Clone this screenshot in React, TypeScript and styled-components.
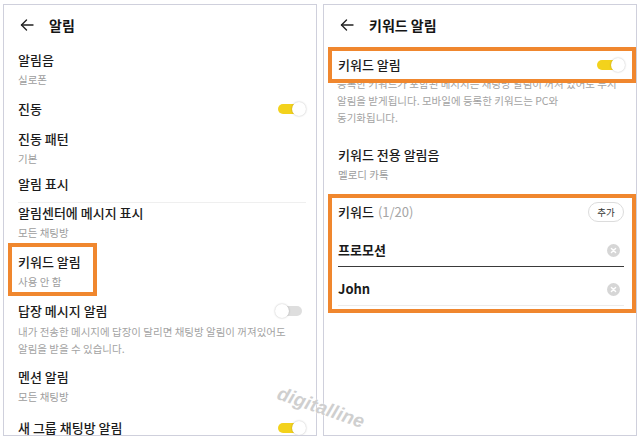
import React from "react";
import styled, { createGlobalStyle } from "styled-components";

const GlobalStyle = createGlobalStyle`
  html, body { margin: 0; padding: 0; background: #ffffff; }
  body { font-family: "Noto Sans CJK KR", "Noto Sans", sans-serif; }
  * { box-sizing: border-box; }
`;

const Page = styled.div`
  position: relative;
  width: 640px;
  height: 440px;
  padding: 4px 3px;
  display: flex;
  gap: 6px;
  background: #fff;
`;

const Panel = styled.section`
  position: relative;
  width: 314px;
  height: 432px;
  border: 1px solid #cfd0dc;
  background: #fff;
  overflow: hidden;
`;

const Header = styled.div`
  height: 40px;
  display: flex;
  align-items: center;
  padding-left: 16px;
  gap: 15px;
`;

const HeaderTitle = styled.h1`
  margin: 0;
  font-size: 14px;
  font-weight: 700;
  color: #151515;
  line-height: 20px;
`;

const Item = styled.div<{ $pt?: number; $pb?: number; $right?: number }>`
  display: flex;
  align-items: center;
  justify-content: space-between;
  padding: ${(p) => p.$pt ?? 5}px ${(p) => p.$right ?? 10}px ${(p) => p.$pb ?? 5}px 14px;
`;

const ItemText = styled.div`
  display: flex;
  flex-direction: column;
`;

const Title = styled.div`
  font-size: 13px;
  font-weight: 500;
  color: #1c1c1c;
  line-height: 20px;
`;

const Sub = styled.div`
  font-size: 10.5px;
  color: #9d9d9d;
  line-height: 19px;
`;

const Desc = styled.div<{ $pad?: string }>`
  font-size: 10.5px;
  color: #a3a3a3;
  line-height: 17px;
  padding: ${(p) => p.$pad ?? "0"};
`;

const SectionLabel = styled.div`
  padding: 1px 10px 0 14px;
  font-size: 13px;
  font-weight: 500;
  color: #1c1c1c;
  line-height: 20px;
`;

const Divider = styled.hr`
  margin: 8px 10px 0 14px;
  border: none;
  border-top: 1px solid #efefef;
  height: 0;
`;

const SwitchBox = styled.span<{ $on: boolean }>`
  position: relative;
  width: 28px;
  height: 14px;
  flex: none;
  &::before {
    content: "";
    position: absolute;
    top: 2px;
    height: 10px;
    border-radius: 5px;
    left: ${(p) => (p.$on ? "0" : "2px")};
    right: ${(p) => (p.$on ? "3px" : "1px")};
    background: ${(p) => (p.$on ? "#f3d21c" : "#dedede")};
  }
`;

const Knob = styled.span<{ $on: boolean }>`
  position: absolute;
  top: 0;
  ${(p) => (p.$on ? "right: 0;" : "left: 0;")}
  width: 14px;
  height: 14px;
  border-radius: 50%;
  background: #fff;
  box-shadow: 0 0 2px rgba(0, 0, 0, 0.28);
`;

const Switch = ({ on }: { on: boolean }) => (
  <SwitchBox $on={on}>
    <Knob $on={on} />
  </SwitchBox>
);

const Highlight = styled.div<{ $left: number; $top: number; $w: number; $h: number }>`
  position: absolute;
  left: ${(p) => p.$left}px;
  top: ${(p) => p.$top}px;
  width: ${(p) => p.$w}px;
  height: ${(p) => p.$h}px;
  border: 4px solid #f0872e;
  pointer-events: none;
`;

const KeywordHead = styled.div`
  display: flex;
  align-items: center;
  justify-content: space-between;
  padding: 13px 12px 0 14px;
`;

const KeywordTitle = styled.div`
  font-size: 13px;
  font-weight: 500;
  color: #1c1c1c;
  line-height: 20px;
  span {
    font-weight: 400;
    color: #a5a5a5;
    margin-left: 4px;
  }
`;

const AddButton = styled.button`
  height: 20px;
  width: 36px;
  padding: 0;
  border: 1px solid #dcdcdc;
  border-radius: 10px;
  background: #fff;
  font-family: inherit;
  font-size: 9.5px;
  color: #333;
  line-height: 18px;
`;

const KeywordList = styled.div`
  padding: 6px 12px 0 14px;
`;

const KeywordRow = styled.div<{ $active?: boolean }>`
  display: flex;
  align-items: center;
  justify-content: space-between;
  padding: 12px 4px 6px 0;
  border-bottom: ${(p) => (p.$active ? "1.5px solid #3a3a3a" : "1px solid #ececec")};
`;

const KeywordText = styled.div`
  font-size: 13px;
  font-weight: 700;
  color: #1a1a1a;
  line-height: 20px;
  font-family: "Noto Sans CJK KR", "Liberation Sans", sans-serif;
`;

const Watermark = styled.div`
  position: absolute;
  left: 278px;
  top: 382px;
  font-family: "Liberation Sans", Arial, sans-serif;
  font-style: italic;
  font-weight: 700;
  font-size: 19px;
  color: #cfcfcf;
  transform: rotate(19deg);
  transform-origin: left center;
  text-shadow: 0 0 2px #fff;
  pointer-events: none;
  letter-spacing: 0.2px;
`;

const BackArrow = () => (
  <svg width="14" height="14" viewBox="0 0 14 14" fill="none" stroke="#222" strokeWidth="1.4" strokeLinecap="round" strokeLinejoin="round">
    <path d="M13 7H1.5" />
    <path d="M6.5 2L1.5 7l5 5" />
  </svg>
);

const ClearIcon = () => (
  <svg width="13" height="13" viewBox="0 0 13 13">
    <circle cx="6.5" cy="6.5" r="6.5" fill="#d6d6d6" />
    <path d="M4.4 4.4l4.2 4.2M8.6 4.4l-4.2 4.2" stroke="#fff" strokeWidth="1.4" strokeLinecap="round" />
  </svg>
);

export default function App() {
  return (
    <>
      <GlobalStyle />
      <Page>
        <Panel>
          <Header>
            <BackArrow />
            <HeaderTitle>알림</HeaderTitle>
          </Header>
          <Item>
            <ItemText>
              <Title>알림음</Title>
              <Sub>실로폰</Sub>
            </ItemText>
          </Item>
          <Item>
            <Title>진동</Title>
            <Switch on />
          </Item>
          <Item>
            <ItemText>
              <Title>진동 패턴</Title>
              <Sub>기본</Sub>
            </ItemText>
          </Item>
          <SectionLabel>알림 표시</SectionLabel>
          <Divider />
          <Item $pt={0}>
            <ItemText>
              <Title>알림센터에 메시지 표시</Title>
              <Sub>모든 채팅방</Sub>
            </ItemText>
          </Item>
          <Item>
            <ItemText>
              <Title>키워드 알림</Title>
              <Sub>사용 안 함</Sub>
            </ItemText>
          </Item>
          <Item $right={13} $pb={2}>
            <Title>답장 메시지 알림</Title>
            <Switch on={false} />
          </Item>
          <Desc $pad="0 10px 5px 14px">
            내가 전송한 메시지에 답장이 달리면 채팅방 알림이 꺼져있어도
            <br />
            알림을 받을 수 있습니다.
          </Desc>
          <Item>
            <ItemText>
              <Title>멘션 알림</Title>
              <Sub>모든 채팅방</Sub>
            </ItemText>
          </Item>
          <Item $pt={7}>
            <Title>새 그룹 채팅방 알림</Title>
            <Switch on />
          </Item>
          <Highlight $left={4} $top={238} $w={89} $h={53} />
        </Panel>

        <Panel>
          <Header>
            <BackArrow />
            <HeaderTitle>키워드 알림</HeaderTitle>
          </Header>
          <Item $right={11} $pt={10} $pb={0}>
            <Title>키워드 알림</Title>
            <Switch on />
          </Item>
          <Desc $pad="0 10px 0 13px">
            등록한 키워드가 포함된 메시지는 채팅방 알림이 꺼져 있어도 무시
            <br />
            알림을 받게됩니다. 모바일에 등록한 키워드는 PC와
            <br />
            동기화됩니다.
          </Desc>
          <Item $pt={19}>
            <ItemText>
              <Title>키워드 전용 알림음</Title>
              <Sub>멜로디 카톡</Sub>
            </ItemText>
          </Item>
          <KeywordHead>
            <KeywordTitle>
              키워드<span>(1/20)</span>
            </KeywordTitle>
            <AddButton>추가</AddButton>
          </KeywordHead>
          <KeywordList>
            <KeywordRow $active>
              <KeywordText>프로모션</KeywordText>
              <ClearIcon />
            </KeywordRow>
            <KeywordRow>
              <KeywordText>John</KeywordText>
              <ClearIcon />
            </KeywordRow>
          </KeywordList>
          <Highlight $left={4} $top={42} $w={308} $h={36} />
          <Highlight $left={4} $top={189} $w={308} $h={119} />
        </Panel>
        <Watermark>digitalline</Watermark>
      </Page>
    </>
  );
}
